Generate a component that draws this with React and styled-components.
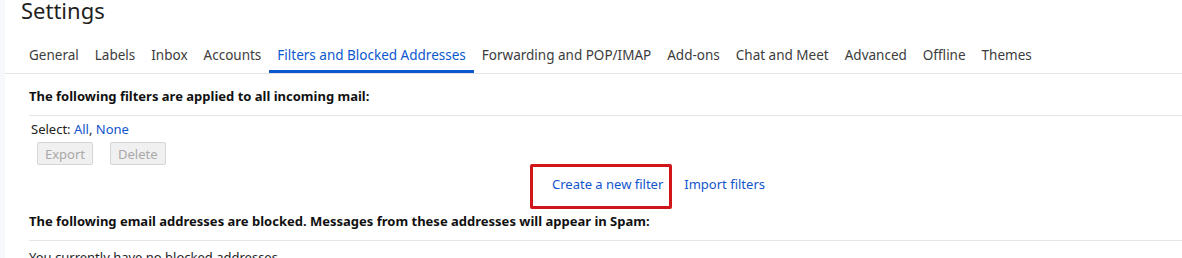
import React from 'react'
import styled, { createGlobalStyle } from 'styled-components'

const GlobalStyle = createGlobalStyle`
  html, body {
    margin: 0;
    padding: 0;
    background: #f6f8fc;
    font-family: "Noto Sans", "Open Sans", sans-serif;
    color: #1f1f1f;
  }
`

const tabs = [
  'General',
  'Labels',
  'Inbox',
  'Accounts',
  'Filters and Blocked Addresses',
  'Forwarding and POP/IMAP',
  'Add-ons',
  'Chat and Meet',
  'Advanced',
  'Offline',
  'Themes',
]

export default function App() {
  return (
    <>
      <GlobalStyle />
      <Page>
        <Panel>
          <Title>Settings</Title>
          <TabBar>
            {tabs.map((t) => (
              <Tab key={t} active={t === 'Filters and Blocked Addresses'}>
                {t}
              </Tab>
            ))}
          </TabBar>
          <Content>
            <SectionHeading>The following filters are applied to all incoming mail:</SectionHeading>
            <Rule />
            <SelectLine>
              Select: <LinkText>All</LinkText>, <LinkText>None</LinkText>
            </SelectLine>
            <ButtonRow>
              <GrayButton disabled>Export</GrayButton>
              <GrayButton disabled>Delete</GrayButton>
            </ButtonRow>
            <ActionRow>
              <Highlighted>
                <LinkText>Create a new filter</LinkText>
                <RedBox />
              </Highlighted>
              <LinkText>Import filters</LinkText>
            </ActionRow>
            <SectionHeading top={19}>
              The following email addresses are blocked. Messages from these addresses will appear in Spam:
            </SectionHeading>
            <Rule />
            <Note>You currently have no blocked addresses.</Note>
          </Content>
        </Panel>
      </Page>
    </>
  )
}

const Page = styled.div`
  height: 258px;
  overflow: hidden;
  padding-left: 5px;
`

const Panel = styled.div`
  background: #fff;
  height: 100%;
`

const Title = styled.h1`
  margin: 0;
  padding: 0 0 0 16px;
  font-size: 22px;
  font-weight: 400;
  line-height: 20px;
  color: #1f1f1f;
`

const TabBar = styled.div`
  display: flex;
  margin-top: 20px;
  padding-left: 16px;
  border-bottom: 1px solid #e3e3e3;
`

const Tab = styled.div`
  padding: 6px 8px 9px;
  font-size: 13.5px;
  line-height: 18px;
  color: ${(p) => (p.active ? '#0b57d0' : '#3c3c3c')};
  box-shadow: ${(p) => (p.active ? 'inset 0 -3px 0 #0b57d0' : 'none')};
  white-space: nowrap;
`

const Content = styled.div`
  padding-left: 24px;
`

const SectionHeading = styled.div`
  font-size: 13px;
  font-weight: 700;
  line-height: 18px;
  padding: ${(p) => p.top || 13}px 0 10px;
  color: #111;
`

const Rule = styled.div`
  border-top: 1px solid #e6e6e6;
`

const SelectLine = styled.div`
  font-size: 13px;
  line-height: 18px;
  padding: 4px 0 0 2px;
  color: #222;
`

const LinkText = styled.span`
  color: #1155cc;
  cursor: pointer;
`

const ButtonRow = styled.div`
  display: flex;
  gap: 17px;
  padding: 4px 0 0 8px;
`

const GrayButton = styled.button`
  font-family: inherit;
  font-size: 13px;
  height: 23px;
  padding: 0 7px;
  background: #f0f0f0;
  border: 1px solid #d6d6d6;
  border-radius: 2px;
  color: #a8a8a8;
`

const ActionRow = styled.div`
  display: flex;
  gap: 21px;
  padding: 10px 0 0 523px;
  font-size: 13px;
  line-height: 18px;
`

const Highlighted = styled.div`
  position: relative;
`

const RedBox = styled.div`
  position: absolute;
  left: -22px;
  top: -11px;
  width: 136px;
  height: 39px;
  border: 3px solid #d0161b;
  border-radius: 2px;
`

const Note = styled.div`
  font-size: 13px;
  line-height: 18px;
  padding-top: 7px;
`
